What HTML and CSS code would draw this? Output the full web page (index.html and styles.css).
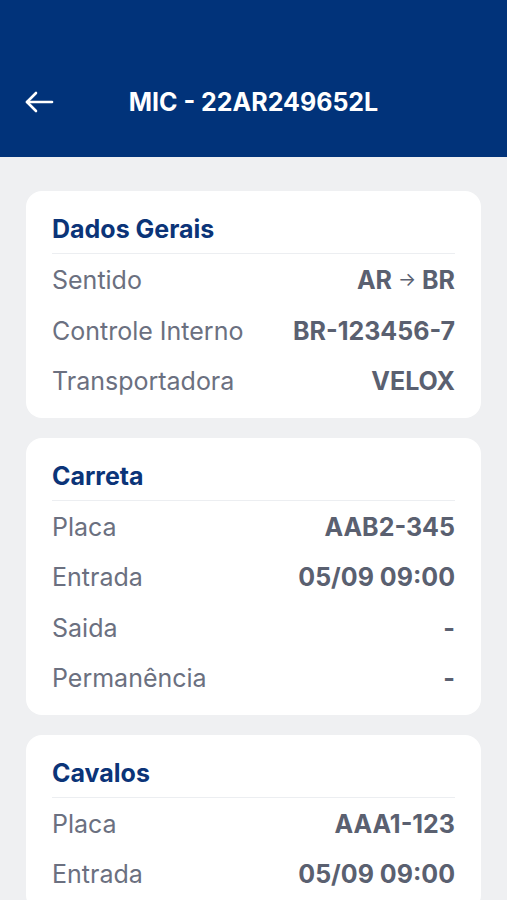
FILE: index.html
```html
<!DOCTYPE html>
<html>

<head>
    <title>MIC - 22AR249652L</title>
    <link rel="stylesheet" href="styles.css">
</head>

<body>
    <header class="topbar">
        <div class="topbar-row">
            <button class="back" aria-label="Voltar">
                <svg width="30" height="24" viewBox="0 0 30 24" fill="none" stroke="#fff" stroke-width="2.6" stroke-linecap="round" stroke-linejoin="round">
                    <path d="M28 12H3" />
                    <path d="M12 3L3 12l9 9" />
                </svg>
            </button>
            <h1 class="title">MIC - 22AR249652L</h1>
            <span></span>
        </div>
    </header>

    <main class="content">
        <section class="card">
            <h2 class="card-title">Dados Gerais</h2>
            <div class="row"><span class="label">Sentido</span><span class="value">AR <span class="dir">→</span> BR</span></div>
            <div class="row"><span class="label">Controle Interno</span><span class="value">BR-123456-7</span></div>
            <div class="row"><span class="label">Transportadora</span><span class="value">VELOX</span></div>
        </section>

        <section class="card">
            <h2 class="card-title">Carreta</h2>
            <div class="row"><span class="label">Placa</span><span class="value">AAB2-345</span></div>
            <div class="row"><span class="label">Entrada</span><span class="value">05/09 09:00</span></div>
            <div class="row"><span class="label">Saida</span><span class="value">-</span></div>
            <div class="row"><span class="label">Permanência</span><span class="value">-</span></div>
        </section>

        <section class="card">
            <h2 class="card-title">Cavalos</h2>
            <div class="row"><span class="label">Placa</span><span class="value">AAA1-123</span></div>
            <div class="row"><span class="label">Entrada</span><span class="value">05/09 09:00</span></div>
        </section>
    </main>
</body>

</html>
```

FILE: styles.css
```css
body {
    margin: 0;
    background: #eff0f2;
    font-family: Inter, "Noto Sans", sans-serif;
    overflow: hidden;
}

.topbar {
    background: #01337a;
    padding: 60px 0 13px;
}

.topbar-row {
    height: 84px;
    display: grid;
    grid-template-columns: 100px 1fr 100px;
    align-items: center;
}

.back {
    background: none;
    border: none;
    padding: 0 0 0 24px;
    display: flex;
    align-items: center;
    cursor: pointer;
}

.title {
    margin: 0;
    color: #fff;
    font-size: 25px;
    font-weight: 700;
    text-align: center;
    white-space: nowrap;
}

.content {
    padding: 34px 26px;
    display: flex;
    flex-direction: column;
    gap: 20px;
}

.card {
    background: #fff;
    border-radius: 16px;
    padding: 23px 26px 12px;
}

.card-title {
    margin: 0;
    color: #0b3478;
    font-size: 25px;
    font-weight: 700;
    line-height: 30px;
    padding-bottom: 9px;
    border-bottom: 1px solid #eceef1;
}

.row {
    display: flex;
    justify-content: space-between;
    align-items: center;
    box-sizing: border-box;
    height: 50.5px;
    padding-top: 2px;
    font-size: 25px;
}

.label {
    color: #6b7080;
}

.value {
    color: #5a6070;
    font-weight: 700;
}

.dir {
    font-weight: 400;
    font-size: 19px;
    position: relative;
    top: -3px;
}
```
